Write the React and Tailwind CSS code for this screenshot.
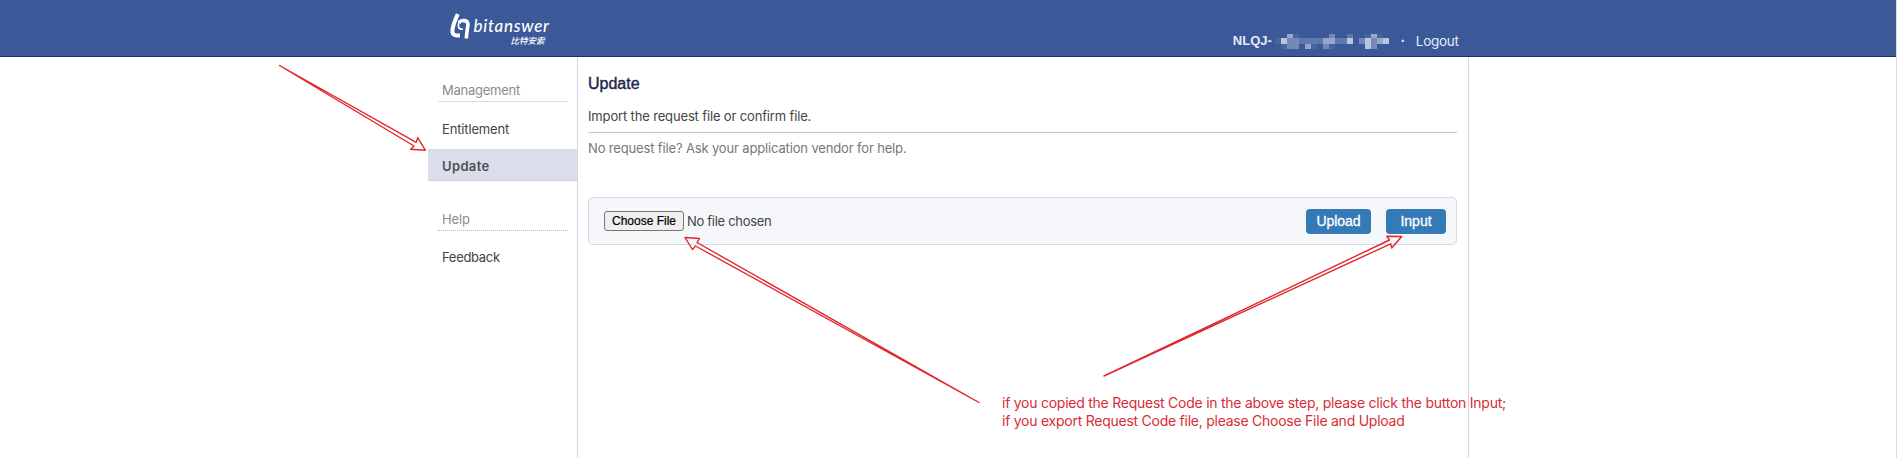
const MOSAIC = [
  [0, 0, 4, 1, 0, 0, 0, 0, 0, 3, 0, 0, 2, 0, 0, 1, 4, 1, 0],
  [1, 5, 3, 3, 2, 2, 2, 2, 4, 4, 2, 2, 5, 0, 3, 5, 3, 4, 5],
  [0, 1, 3, 3, 0, 4, 1, 0, 3, 1, 0, 0, 0, 0, 0, 5, 3, 0, 0],
];
const SHADES = ["#3b5998", "#4a66a2", "#5f78ae", "#7589b9", "#96a6cc", "#b9c5df"];

function Logo() {
  return (
    <div className="flex w-[104px] pt-[13px] text-white">
      <svg className="block h-[27px] w-[21px] shrink-0" viewBox="0 0 21 27" fill="none" stroke="currentColor">
        <path d="M7.8 1.200 C5.600 6 3.200 12 2.500 16.500 C2 20.500 3.200 22.300 6.800 22.500 L10 22.500" strokeWidth="4" />
        <path d="M9 9.500 C11.500 6.500 18.400 6.600 17.900 12.200 C17.500 16 16.400 20 16.400 25.500" strokeWidth="3.6" />
        <path d="M9.500 8.800 C7.600 11.500 7.500 16.600 13 16.300" strokeWidth="1.6" />
      </svg>
      <div className="flex w-[82px] flex-col pl-[3px]">
        <span className="h-[19px] pt-[3px] font-['Lato'] text-[17px] leading-[19px] font-medium tracking-[0.7px] italic">bitanswer</span>
        <span className="mr-[8px] h-[10px] self-end whitespace-nowrap pt-[3px] font-['Noto_Sans_CJK_SC'] text-[8.5px] leading-[10px] font-medium italic">比特安索</span>
      </div>
    </div>
  );
}

function Header() {
  return (
    <header className="h-[57px] border-b border-[#25305f] bg-[#3b5998]">
      <div className="mx-auto flex h-full w-[1041px] items-start pr-[10px] pl-[22px]">
        <Logo />
        <div className="mt-[33px] ml-auto flex h-4 items-center font-['Liberation_Sans'] text-[#e4eaf6]">
          <span className="text-[13px] leading-4 font-bold">NLQJ-</span>
          <div className="ml-[3px] grid w-[114px] grid-cols-19 grid-rows-[4px_6px_5px]">
            {MOSAIC.flat().map((v, i) => (
              <i key={i} className="block" style={{ background: SHADES[v] }} />
            ))}
          </div>
          <span className="ml-[12px] w-[15px] text-[14px] font-bold">·</span>
          <span className="font-['Inter'] text-[13.5px] leading-4 tracking-[-0.3px]">Logout</span>
        </div>
      </div>
    </header>
  );
}

function Sidebar() {
  return (
    <nav className="w-[149px] shrink-0 pt-[23px] font-['Inter'] text-[13px] leading-5 tracking-[-0.15px] text-[#444]">
      <div className="mr-[9px] ml-[10px] h-[22px] border-b border-[#dcdcdc] pl-1 tracking-[-0.25px] text-[#8c8c8c]">Management</div>
      <div className="mt-[17px] pl-[14px]">Entitlement</div>
      <div className="mt-[10px] h-8 border-b border-[#ccd2e2] bg-[#d9deea] pt-[7px] pl-[14px] font-semibold tracking-[0.35px] text-[#505050]">Update</div>
      <div className="mt-[28px] mr-[9px] ml-[10px] h-[22px] border-b border-dotted border-[#bbb] pl-1 text-[#8c8c8c]">Help</div>
      <div className="mt-[16px] pl-[14px] tracking-[-0.3px]">Feedback</div>
    </nav>
  );
}

function Content() {
  return (
    <main className="h-[401px] w-[892px] border-x border-[#d3d6e2] pr-[11px] pl-[10px] font-['Inter'] text-[13px] tracking-[-0.15px]">
      <h1 className="pt-[17px] font-['Liberation_Sans'] text-[16px] leading-5 tracking-normal text-[#20274a] [-webkit-text-stroke:0.4px]">Update</h1>
      <p className="mt-[12px] h-[27px] border-b border-[#c4c4c4] leading-5 text-[#444]">Import the request file or confirm file.</p>
      <p className="mt-[5px] leading-5 text-[#777]">No request file? Ask your application vendor for help.</p>
      <div className="mt-[39px] flex h-[48px] items-center rounded-[5px] border border-[#d3d9e9] bg-[#f5f7fb] pr-[10px] pl-[15px]">
        <button className="h-5 w-20 rounded-[3px] border border-[#767676] bg-[#efefef] font-['Liberation_Sans'] text-[12px] leading-none tracking-normal text-black [-webkit-text-stroke:0.2px]">Choose File</button>
        <span className="ml-[3px] pt-px tracking-[-0.3px] text-[#444]">No file chosen</span>
        <button className="ml-auto h-[25px] w-[65px] rounded-[4px] bg-[#337ab7] font-['Liberation_Sans'] text-[14px] leading-none tracking-[-0.1px] text-white [-webkit-text-stroke:0.3px]">Upload</button>
        <button className="ml-[15px] h-[25px] w-[60px] rounded-[4px] bg-[#337ab7] font-['Liberation_Sans'] text-[14px] leading-none tracking-normal text-white [-webkit-text-stroke:0.3px]">Input</button>
      </div>
    </main>
  );
}

function Annotations() {
  return (
    <div className="pointer-events-none absolute inset-0">
      <svg className="absolute inset-0" width="1897" height="458" fill="none" stroke="#e0282e" strokeWidth="1.4" strokeLinejoin="round">
        <path d="M279.5 65.500 L414 146 L410.700 149.300 L425.300 150.200 L417.700 137.700 L416.200 142.300 Z" />
        <path d="M979 402.500 L695.500 246 L692.500 249.500 L685 237.500 L699.500 238.500 L697 242.500 Z" />
        <path d="M1104 376 L1389.500 240 L1386.700 236.200 L1401.700 236.500 L1391.700 248 L1390.700 243.800 Z" />
      </svg>
      <p className="absolute top-[394px] left-[1002px] font-['Inter'] text-[14px] leading-[18px] tracking-[-0.25px] whitespace-nowrap text-[#d92c36]">
        if you copied the Request Code in the above step, please click the button Input;<br />
        if you export Request Code file, please Choose File and Upload
      </p>
    </div>
  );
}

export default function App() {
  return (
    <div className="relative h-[458px] overflow-hidden border-r border-[#dedede] bg-white">
      <Header />
      <div className="ml-[428px] flex w-[1041px]">
        <Sidebar />
        <Content />
      </div>
      <Annotations />
    </div>
  );
}
